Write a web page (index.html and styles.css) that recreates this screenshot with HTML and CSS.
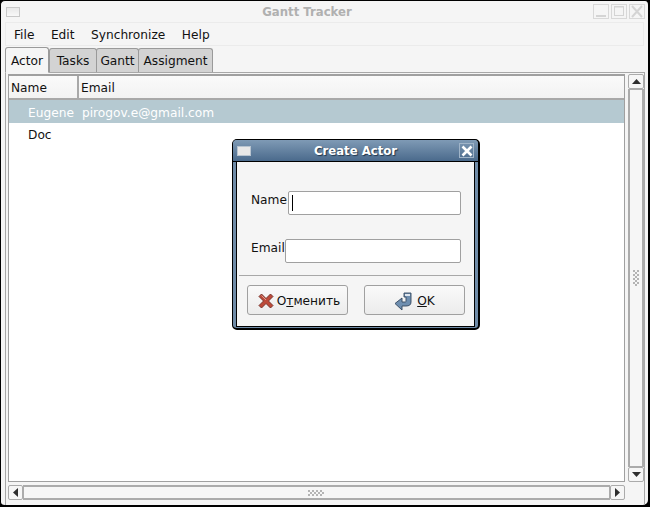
FILE: index.html
```html
<!DOCTYPE html>
<html>
<head>
<meta charset="utf-8">
<title>Gantt Tracker</title>
<link rel="stylesheet" href="styles.css">
</head>
<body>
<div class="window">
  <div class="titlebar">
    <span class="win-menu"></span>
    <span class="win-title">Gantt Tracker</span>
    <span class="win-btns">
      <span class="win-btn"><svg width="14" height="13"><path d="M2 11h10" stroke="#d4d4d4" stroke-width="2"/></svg></span>
      <span class="win-btn"><svg width="14" height="13"><rect x="2.500" y="1.500" width="9" height="9" fill="none" stroke="#d4d4d4"/><path d="M3 2h8" stroke="#d4d4d4"/></svg></span>
      <span class="win-btn"><svg width="14" height="13"><path d="M2 1l10 11M12 1L2 12" stroke="#d4d4d4" stroke-width="2"/></svg></span>
    </span>
  </div>
  <div class="menubar">
    <span class="menu-item">File</span>
    <span class="menu-item">Edit</span>
    <span class="menu-item">Synchronize</span>
    <span class="menu-item">Help</span>
  </div>
  <div class="tabs">
    <span class="tab tab-active">Actor</span>
    <span class="tab tab-tasks">Tasks</span>
    <span class="tab tab-gantt">Gantt</span>
    <span class="tab tab-assign">Assigment</span>
  </div>
  <div class="panel">
    <div class="grid-area">
      <div class="list">
        <div class="list-head">
          <span class="col-name">Name</span>
          <span class="col-email">Email</span>
        </div>
        <div class="row row-sel"><span class="cell-name">Eugene</span><span>pirogov.e@gmail.com</span></div>
        <div class="row"><span class="cell-name">Doc</span></div>
      </div>
      <div class="vscroll">
        <span class="sb-btn"><svg width="9" height="6"><path d="M4.500 0L9 5H0z" fill="#2e2e2e"/></svg></span>
        <span class="sb-thumb-v">
          <svg width="7" height="17"><g fill="#b4b4b4"><path d="M0 0h2v2H0zM4 0h2v2H4zM2 2h2v2H2zM0 4h2v2H0zM4 4h2v2H4zM2 6h2v2H2zM0 8h2v2H0zM4 8h2v2H4zM2 10h2v2H2zM0 12h2v2H0zM4 12h2v2H4zM2 14h2v2H2z"/></g></svg>
        </span>
        <span class="sb-btn"><svg width="9" height="6"><path d="M0 0h9L4.500 5z" fill="#2e2e2e"/></svg></span>
      </div>
      <div class="hscroll">
        <span class="sb-btn-h"><svg width="6" height="9"><path d="M5 0v9L0 4.500z" fill="#2e2e2e"/></svg></span>
        <span class="sb-thumb-h">
          <svg width="17" height="6"><g fill="#b4b4b4"><path d="M0 0h2v2H0zM0 4h2v2H0zM2 2h2v2H2zM4 0h2v2H4zM4 4h2v2H4zM6 2h2v2H6zM8 0h2v2H8zM8 4h2v2H8zM10 2h2v2h-2zM12 0h2v2h-2zM12 4h2v2h-2zM14 2h2v2h-2z"/></g></svg>
        </span>
        <span class="sb-btn-h"><svg width="6" height="9"><path d="M0 0v9L5 4.500z" fill="#2e2e2e"/></svg></span>
      </div>
    </div>
  </div>
</div>

<div class="dialog">
  <div class="dlg-title">
    <span class="dlg-menu"></span>
    <span class="dlg-caption">Create Actor</span>
    <span class="dlg-close"><svg width="12" height="12"><path d="M1.500 1.500l9 9M10.500 1.500l-9 9" stroke="#fff" stroke-width="2.600"/></svg></span>
  </div>
  <div class="dlg-body">
    <div class="form">
      <div class="field field-name"><label>Name</label><span class="input"><span class="caret"></span></span></div>
      <div class="field field-email"><label>Email</label><span class="input"></span></div>
    </div>
    <div class="dlg-actions">
      <span class="btn btn-cancel">
        <svg width="16" height="16" viewBox="0 0 16 16"><path d="M1 3.500L3.500 1 8 5.500 12.500 1 15 3.500 10.500 8 15 12.500 12.500 15 8 10.500 3.500 15 1 12.500 5.500 8z" fill="#bd4a3a" stroke="#6e2a22" stroke-width=".9"/><path d="M3.500 2.500L8 7" stroke="#e09a8e"/></svg>
        <span>О<u>т</u>менить</span>
      </span>
      <span class="btn">
        <svg width="20" height="20" viewBox="0 0 20 20"><path d="M10 2h7v9c0 3-2 4-5 4H8v4L1 12.500 8 7v4h3c1 0 1-.5 1-1V6h-2z" fill="#6f8fb0" stroke="#33475f" stroke-width=".9"/><path d="M11 3h5v2h-5z" fill="#dfe6ee"/></svg>
        <span><u>O</u>K</span>
      </span>
    </div>
  </div>
</div>
</body>
</html>
```
FILE: styles.css
```css
html, body { margin: 0; padding: 0; height: 100%; background: #000; }
body { font-family: "DejaVu Sans", Verdana, sans-serif; font-size: 12.2px; color: #111; overflow: hidden; }
svg { display: block; }

.window { box-sizing: border-box; width: 650px; height: 507px; background: #f5f5f5; border: 1px solid #000; border-width: 1px 2px 2px 1px; border-radius: 5px 5px 7px 5px; padding: 0 3px 0 4px; display: flex; flex-direction: column; }

.titlebar { height: 21px; display: flex; align-items: center; position: relative; flex: none; }
.win-menu { width: 12px; height: 8px; margin-left: 1px; border: 1px solid #c8c8c8; background: linear-gradient(#e8e8e8, #f8f8f8); }
.win-title { position: absolute; left: 0; right: 36px; text-align: center; color: #b0b0b0; font-weight: bold; font-size: 11.7px; }
.win-btns { margin-left: auto; display: flex; gap: 2px; }
.win-btn { box-sizing: border-box; width: 16px; height: 15px; border: 1px solid #d8d8d8; display: block; }

.menubar { box-sizing: border-box; height: 24px; flex: none; display: flex; align-items: center; padding: 1px 0 0 8px; gap: 16.5px; border: 1px solid #ebebeb; margin-right: 1px; }
.menu-item { display: block; }

.tabs { height: 26px; flex: none; display: flex; align-items: flex-end; position: relative; z-index: 1; }
.tab { box-sizing: border-box; height: 24px; line-height: 25px; text-align: center; background: #d3d3d3; border: 1px solid #9a9a9a; border-bottom: 0; border-radius: 3px 3px 0 0; margin-right: -1px; }
.tab-active { width: 44px; height: 26px; line-height: 26px; background: #f5f5f5; border-bottom: 1px solid #f5f5f5; margin-bottom: -1px; margin-right: 0; position: relative; }
.tab-tasks { width: 48px; }
.tab-gantt { width: 43px; }
.tab-assign { width: 75px; }

.panel { flex: 1; border: 1px solid #a8a8a8; border-width: 1px 1px 0 1px; padding: 0 0 4px 2px; display: flex; }
.grid-area { flex: 1; display: grid; grid-template-columns: 617px 16px; grid-template-rows: 408px 15px; column-gap: 3px; row-gap: 3px; padding-top: 1px; }

.list { border: 1px solid #a0a0a0; background: #fff; box-sizing: border-box; }
.list-head { display: flex; height: 25px; box-sizing: border-box; background: linear-gradient(#fafafa, #f2f2f2); border-top: 1px solid #a0a0a0; border-bottom: 2px solid #a8a8a8; line-height: 25px; }
.col-name { box-sizing: border-box; width: 70px; padding-left: 2px; border-right: 2px solid #a8a8a8; }
.col-email { padding-left: 2px; }
.row { height: 23px; line-height: 25px; display: flex; }
.row-sel { background: #b5c9d1; color: #fff; line-height: 26px; }
.cell-name { box-sizing: border-box; width: 73px; padding-left: 19px; }

.vscroll { display: flex; flex-direction: column; box-sizing: border-box; }
.sb-btn { box-sizing: border-box; height: 15px; flex: none; border: 1px solid #ababab; border-radius: 2px; background: #f6f6f6; display: flex; align-items: center; justify-content: center; }
.sb-thumb-v { flex: 1; box-sizing: border-box; border: 1px solid #ababab; border-width: 1px 2px; background: #f6f6f6; display: flex; align-items: center; justify-content: center; }
.hscroll { display: flex; grid-column: 1; }
.sb-btn-h { box-sizing: border-box; width: 15px; flex: none; border: 1px solid #ababab; border-radius: 2px; background: #f6f6f6; display: flex; align-items: center; justify-content: center; }
.sb-thumb-h { flex: 1; box-sizing: border-box; border: 1px solid #ababab; border-width: 2px 1px; background: #f6f6f6; display: flex; align-items: center; justify-content: center; }

.dialog { position: absolute; left: 232px; top: 139px; width: 248px; height: 191px; box-sizing: border-box; border: 1px solid #000; border-width: 1px 2px 2px 1px; border-radius: 5px; background: #6f8ba7; padding: 0 3px 1px 3px; display: flex; flex-direction: column; }
.dlg-title { height: 21px; flex: none; display: flex; align-items: center; position: relative; background: linear-gradient(#7f9ab5, #4a6a8c); margin: 0 -3px; padding: 0 3px; border-radius: 4px 4px 0 0; border-bottom: 1px solid #000; }
.dlg-menu { width: 12px; height: 8px; margin-left: 1px; background: #e8e8e8; border: 1px solid #b8c4d0; }
.dlg-caption { position: absolute; left: 0; right: 0; text-align: center; color: #fff; font-weight: bold; font-size: 11.7px; text-shadow: 1px 1px 1px #20364c; }
.dlg-close { margin-left: auto; width: 13px; height: 13px; border: 1px solid #a0b4c8; display: flex; align-items: center; justify-content: center; margin-right: 1px; }

.dlg-body { flex: 1; background: #f5f5f5; display: flex; flex-direction: column; border: 1px solid #000; border-width: 0 1px 1px 1px; }
.form { height: 114px; flex: none; box-sizing: border-box; padding: 29px 11px 0 12px; border-bottom: 1px solid #a8a8a8; margin: 0 2px; display: flex; flex-direction: column; gap: 24px; }
.field { display: flex; height: 24px; align-items: flex-start; }
.field label { line-height: 18px; }
.input { box-sizing: border-box; display: block; flex: 1; height: 24px; background: #fff; border: 1px solid #a0a0a0; border-radius: 2px; padding: 3px; }
.field-name label { margin-right: 1px; }
.caret { display: block; width: 1px; height: 16px; background: #000; }

.dlg-actions { display: flex; padding: 9px 0 0 10px; gap: 16px; }
.btn { box-sizing: border-box; width: 101px; height: 30px; padding-top: 1px; border: 1px solid #a0a0a0; border-radius: 3px; background: linear-gradient(#fafafa, #ececec); display: flex; align-items: center; justify-content: center; gap: 3px; }
.btn-cancel { padding-left: 3px; }
.btn u { text-underline-offset: 1px; }
```
